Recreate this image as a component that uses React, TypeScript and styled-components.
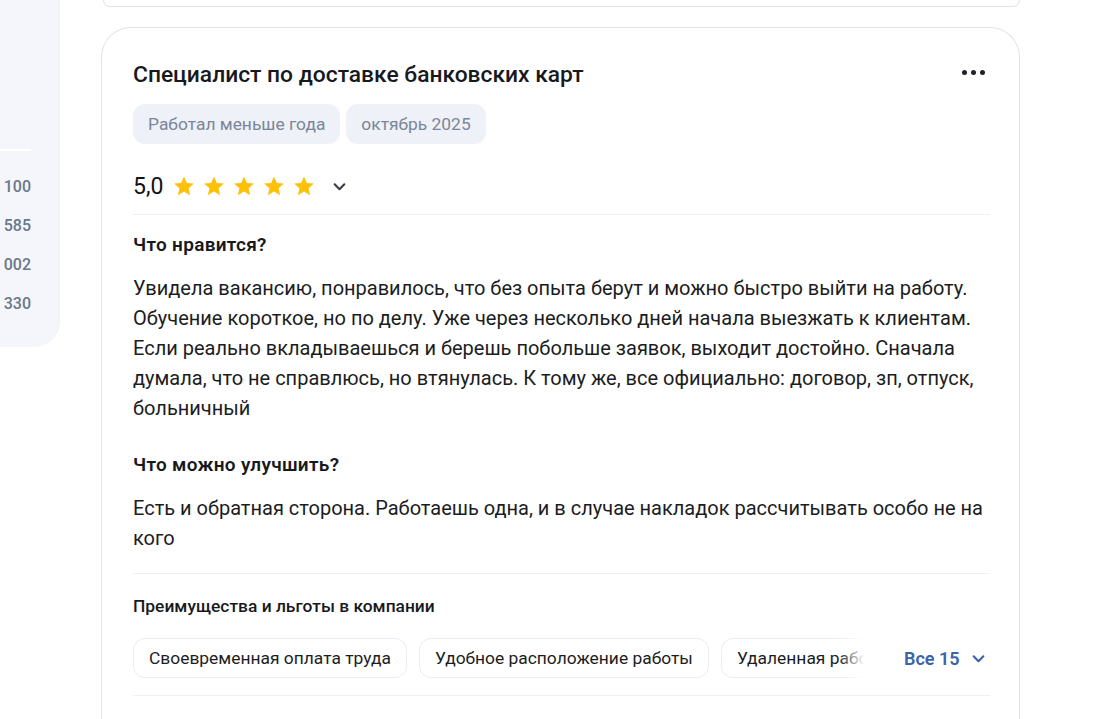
import React from "react";
import styled, { createGlobalStyle } from "styled-components";

const Global = createGlobalStyle`
  html, body { margin: 0; padding: 0; background: #ffffff; }
  body { font-family: Roboto, "Noto Sans", Arial, sans-serif; color: #1b1d22; -webkit-font-smoothing: antialiased; }
  * { box-sizing: border-box; }
`;

const Page = styled.div`
  display: flex;
  align-items: flex-start;
  gap: 41px;
  width: 1107px;
  height: 719px;
  overflow: hidden;
`;

const Sidebar = styled.aside`
  width: 60px;
  height: 347px;
  flex: none;
  background: #f4f6fb;
  border-right: 1px solid #eef1f7;
  border-bottom-right-radius: 26px;
  padding-top: 149px;
  display: flex;
  flex-direction: column;
  align-items: flex-end;
`;

const SideDivider = styled.div`
  align-self: flex-start;
  width: 31px;
  height: 2px;
  background: #ffffff;
  margin-bottom: 16px;
`;

const SideValue = styled.div`
  width: 100%;
  padding-right: 28px;
  text-align: right;
  font-size: 16px;
  font-weight: 500;
  line-height: 39px;
  color: #6b778a;
  overflow: hidden;
  white-space: nowrap;
  direction: rtl;
`;

const Column = styled.main`
  width: 919px;
  flex: none;
  display: flex;
  flex-direction: column;
  gap: 20px;
`;

const PrevCard = styled.div`
  height: 7px;
  border: 1px solid #dfe4ec;
  border-top: none;
  border-bottom-left-radius: 30px;
  border-bottom-right-radius: 30px;
  margin-left: 2px;
`;

const Card = styled.section`
  border: 1px solid #dfe4ec;
  border-bottom: none;
  border-top-left-radius: 30px;
  border-top-right-radius: 30px;
  padding: 32px 29px 40px 31px;
  height: 700px;
`;

const Header = styled.div`
  display: flex;
  align-items: center;
  justify-content: space-between;
`;

const Title = styled.h2`
  margin: 0;
  font-size: 22.8px;
  font-weight: 500;
  line-height: 30px;
  color: #17191d;
`;

const Dots = styled.button`
  border: none;
  background: transparent;
  padding: 0;
  margin-right: 5px;
  margin-top: -6px;
  display: flex;
  gap: 4px;
  cursor: pointer;
`;

const Dot = styled.span`
  width: 5px;
  height: 5px;
  border-radius: 50%;
  background: #1e2128;
`;

const Tags = styled.div`
  display: flex;
  gap: 6px;
  margin-top: 14px;
`;

const Tag = styled.span`
  height: 40px;
  line-height: 40px;
  padding: 0 15px;
  border-radius: 12px;
  background: #eef1f7;
  color: #7b8698;
  font-size: 17.4px;
`;

const RatingRow = styled.div`
  display: flex;
  align-items: center;
  height: 28px;
  margin-top: 28px;
`;

const Score = styled.span`
  font-size: 23px;
  font-weight: 400;
  color: #111318;
  margin-right: 10px;
`;

const Stars = styled.div`
  display: flex;
  gap: 8px;
`;

const Expand = styled.span`
  display: flex;
  margin-left: 17px;
  color: #3a3d44;
`;

const Divider = styled.div<{ $top: number; $bottom: number }>`
  height: 1px;
  background: #eef0f5;
  margin-top: ${(p) => p.$top}px;
  margin-bottom: ${(p) => p.$bottom}px;
`;

const Question = styled.h3<{ $top?: number }>`
  margin: ${(p) => p.$top ?? 0}px 0 16px 0;
  font-size: 19px;
  font-weight: 600;
  letter-spacing: 0.3px;
  line-height: 24px;
  color: #17191d;
`;

const Answer = styled.p`
  margin: 0;
  font-size: 20px;
  line-height: 30px;
  color: #1b1d22;
`;

const Label = styled.h4`
  margin: 0 0 20px 0;
  font-size: 17.4px;
  font-weight: 500;
  line-height: 24px;
  color: #17191d;
`;

const BenefitsRow = styled.div`
  display: flex;
  align-items: center;
`;

const ChipTrack = styled.div`
  position: relative;
  display: flex;
  gap: 12px;
  width: 736px;
  overflow: hidden;
  &::after {
    content: "";
    position: absolute;
    right: 0;
    top: 0;
    bottom: 0;
    width: 30px;
    background: linear-gradient(to right, rgba(255,255,255,0), #ffffff 85%);
  }
`;

const Chip = styled.span`
  flex: none;
  height: 40px;
  line-height: 38px;
  padding: 0 15px;
  border: 1px solid #e8ecf3;
  border-radius: 12px;
  font-size: 17.4px;
  color: #1b1d22;
  white-space: nowrap;
`;

const ShowAll = styled.button`
  margin-left: 35px;
  border: none;
  background: transparent;
  padding: 0;
  display: flex;
  align-items: center;
  gap: 11px;
  font-family: inherit;
  font-size: 18px;
  font-weight: 600;
  color: #3a63aa;
  cursor: pointer;
`;

const Star = () => (
  <svg width="22" height="22" viewBox="0 0 24 24">
    <path
      d="M12 1.6l3.1 7.1 7.7.7-5.8 5.1 1.7 7.6L12 18.1 5.3 22.1 7 14.5 1.2 9.4l7.7-.7z"
      fill="#ffc107"
    />
  </svg>
);

const Chevron = ({ color }: { color: string }) => (
  <svg width="15" height="15" viewBox="0 0 14 14" fill="none">
    <path d="M2.5 5l4.5 4.5L11.5 5" stroke={color} strokeWidth="2" strokeLinecap="round" strokeLinejoin="round" />
  </svg>
);

export default function App() {
  return (
    <>
      <Global />
      <Page>
        <Sidebar>
          <SideDivider />
          <SideValue>100</SideValue>
          <SideValue>585</SideValue>
          <SideValue>002</SideValue>
          <SideValue>330</SideValue>
        </Sidebar>
        <Column>
          <PrevCard />
          <Card>
            <Header>
              <Title>Специалист по доставке банковских карт</Title>
              <Dots aria-label="Ещё">
                <Dot />
                <Dot />
                <Dot />
              </Dots>
            </Header>
            <Tags>
              <Tag>Работал меньше года</Tag>
              <Tag>октябрь 2025</Tag>
            </Tags>
            <RatingRow>
              <Score>5,0</Score>
              <Stars>
                <Star />
                <Star />
                <Star />
                <Star />
                <Star />
              </Stars>
              <Expand>
                <Chevron color="#3a3d44" />
              </Expand>
            </RatingRow>
            <Divider $top={14} $bottom={18} />
            <Question>Что нравится?</Question>
            <Answer>
              Увидела вакансию, понравилось, что без опыта берут и можно быстро выйти на работу.
              Обучение короткое, но по делу. Уже через несколько дней начала выезжать к клиентам.
              Если реально вкладываешься и берешь побольше заявок, выходит достойно. Сначала
              думала, что не справлюсь, но втянулась. К тому же, все официально: договор, зп, отпуск,
              больничный
            </Answer>
            <Question $top={30}>Что можно улучшить?</Question>
            <Answer>
              Есть и обратная сторона. Работаешь одна, и в случае накладок рассчитывать особо не на
              кого
            </Answer>
            <Divider $top={20} $bottom={20} />
            <Label>Преимущества и льготы в компании</Label>
            <BenefitsRow>
              <ChipTrack>
                <Chip>Своевременная оплата труда</Chip>
                <Chip>Удобное расположение работы</Chip>
                <Chip>Удаленная работа</Chip>
              </ChipTrack>
              <ShowAll>
                Все 15
                <Chevron color="#3a63aa" />
              </ShowAll>
            </BenefitsRow>
            <Divider $top={17} $bottom={0} />
          </Card>
        </Column>
      </Page>
    </>
  );
}
